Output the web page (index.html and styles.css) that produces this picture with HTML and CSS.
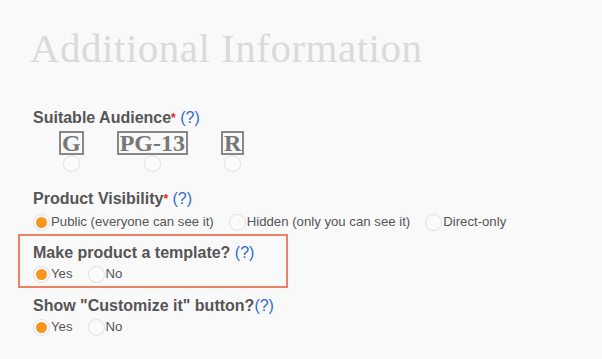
FILE: index.html
```html
<!DOCTYPE html>
<html lang="en">
<head>
  <meta charset="UTF-8">
  <title>Additional Information</title>
  <link rel="stylesheet" href="styles.css">
</head>
<body>
  <div class="page">
    <h1>Additional Information</h1>

    <div class="field audience">
      <div class="label">Suitable Audience<span class="req">*</span> <a class="help">(?)</a></div>
      <div class="ratings">
        <label class="rating">
          <span class="badge">G</span>
          <input type="radio" name="audience">
        </label>
        <label class="rating">
          <span class="badge">PG-13</span>
          <input type="radio" name="audience">
        </label>
        <label class="rating">
          <span class="badge">R</span>
          <input type="radio" name="audience">
        </label>
      </div>
    </div>

    <div class="field visibility">
      <div class="label">Product Visibility<span class="req">*</span> <a class="help">(?)</a></div>
      <div class="options">
        <label><input type="radio" name="vis" checked>Public (everyone can see it)</label>
        <label><input type="radio" name="vis">Hidden (only you can see it)</label>
        <label><input type="radio" name="vis">Direct-only</label>
      </div>
    </div>

    <div class="field highlight">
      <div class="label">Make product a template? <a class="help">(?)</a></div>
      <div class="options">
        <label><input type="radio" name="tpl" checked>Yes</label>
        <label><input type="radio" name="tpl">No</label>
      </div>
    </div>

    <div class="field customize">
      <div class="label">Show "Customize it" button?<a class="help">(?)</a></div>
      <div class="options">
        <label><input type="radio" name="cust" checked>Yes</label>
        <label><input type="radio" name="cust">No</label>
      </div>
    </div>
  </div>
</body>
</html>
```

FILE: styles.css
```css
body {
  margin: 0;
  background-color: #f9f9f9;
  font-family: "Liberation Sans", Arial, sans-serif;
  color: #555;
}

.page {
  padding: 18px 0 0 33px;
}

h1 {
  font-family: "Liberation Serif", "DejaVu Serif", serif;
  font-weight: normal;
  font-size: 41px;
  color: #dadada;
  margin: 0 0 0 -3px;
  line-height: 60px;
  letter-spacing: 0.5px;
}

.label {
  font-size: 16px;
  font-weight: bold;
  line-height: 20px;
}

.req {
  color: #e0251b;
  font-size: 12px;
  vertical-align: top;
}

.help {
  color: #2f6bd1;
  font-weight: normal;
  font-size: 16px;
  cursor: pointer;
}

/* field spacing */
.audience {
  margin-top: 30px;
}

.visibility {
  margin-top: 17px;
}

.visibility .options {
  margin-top: 2px;
}

.highlight {
  margin-top: 1px;
  margin-left: -15px;
  border: 2px solid #eb8264;
  padding: 7px 0 1px 13px;
  width: 253px;
}

.customize {
  margin-top: 8px;
}

/* rating badges */
.ratings {
  display: flex;
  padding-left: 26px;
  gap: 33px;
  margin-top: 3px;
}

.rating {
  display: flex;
  flex-direction: column;
  align-items: center;
}

.badge {
  font-family: "Liberation Serif", serif;
  font-weight: bold;
  font-size: 24px;
  line-height: 20px;
  color: #777;
  border: 2px solid #888;
  padding: 0 1px;
}

.rating input {
  margin-top: 6px;
}

/* radios */
input[type="radio"] {
  appearance: none;
  -webkit-appearance: none;
  width: 17px;
  height: 17px;
  margin: 0;
  border-radius: 50%;
  border: 1px solid #e0e0e0;
  background: #fbfbfb;
  box-sizing: border-box;
  display: inline-flex;
  align-items: center;
  justify-content: center;
}

input[type="radio"]:checked::before {
  content: "";
  width: 11px;
  height: 11px;
  border-radius: 50%;
  background: #f7961f;
}

.options {
  display: flex;
  font-size: 13.2px;
  line-height: 22px;
}

.options label {
  display: flex;
  align-items: center;
  gap: 1px;
  margin-right: 15px;
}
```
